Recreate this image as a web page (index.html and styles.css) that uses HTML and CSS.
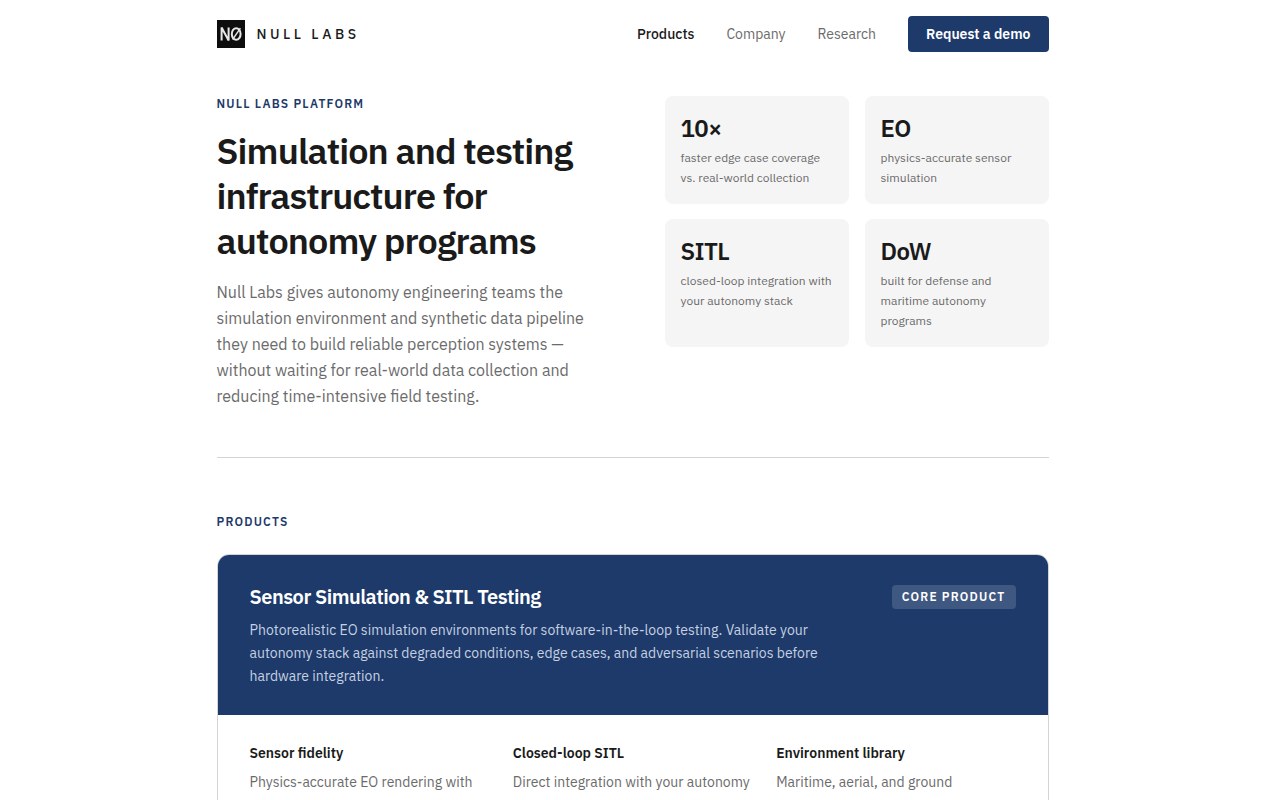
FILE: index.html
```html
<!DOCTYPE html>
<html lang="en">
<head>
<meta charset="utf-8">
<meta name="viewport" content="width=device-width, initial-scale=1">
<title>Null Labs – Products</title>
<link rel="stylesheet" href="styles.css">
</head>
<body>
<div class="page">
  <header class="header">
    <a class="brand" href="#">
      <svg class="brand-mark" viewBox="0 0 28 28" aria-hidden="true">
        <rect width="28" height="28" fill="#0d0d0d"/>
        <g fill="none" stroke="#e6e6e6" stroke-width="2">
          <path d="M4.6 20.5V7.5L11.6 20.5V7.5"/>
          <ellipse cx="19.2" cy="14" rx="4.4" ry="5.7"/>
          <path d="M15.6 19.5L23.4 8.2" stroke-width="1.4"/>
        </g>
      </svg>
      <span class="brand-name">NULL LABS</span>
    </a>
    <nav class="nav">
      <a class="nav-link nav-link-active" href="#">Products</a>
      <a class="nav-link" href="#">Company</a>
      <a class="nav-link" href="#">Research</a>
      <a class="demo" href="#">Request a demo</a>
    </nav>
  </header>
  <main>
    <section class="hero">
      <div class="intro">
        <p class="eyebrow">NULL LABS PLATFORM</p>
        <h1 class="title">Simulation and testing<br>infrastructure for<br>autonomy programs</h1>
        <p class="lead">Null Labs gives autonomy engineering teams the<br>simulation environment and synthetic data pipeline<br>they need to build reliable perception systems —<br>without waiting for real-world data collection and<br>reducing time-intensive field testing.</p>
      </div>
      <div class="stats">
        <div class="stat"><p class="stat-value">10×</p><p class="stat-text">faster edge case coverage<br>vs. real-world collection</p></div>
        <div class="stat"><p class="stat-value">EO</p><p class="stat-text">physics-accurate sensor<br>simulation</p></div>
        <div class="stat"><p class="stat-value">SITL</p><p class="stat-text">closed-loop integration with<br>your autonomy stack</p></div>
        <div class="stat"><p class="stat-value">DoW</p><p class="stat-text">built for defense and<br>maritime autonomy<br>programs</p></div>
      </div>
    </section>
    <section class="products">
      <p class="eyebrow">PRODUCTS</p>
      <article class="product">
        <div class="product-head">
          <div class="product-intro">
            <h2 class="product-title">Sensor Simulation &amp; SITL Testing</h2>
            <p class="product-text">Photorealistic EO simulation environments for software-in-the-loop testing. Validate your<br>autonomy stack against degraded conditions, edge cases, and adversarial scenarios before<br>hardware integration.</p>
          </div>
          <span class="tag">CORE PRODUCT</span>
        </div>
        <div class="features">
          <div><h3 class="feature-title">Sensor fidelity</h3><p class="feature-text">Physics-accurate EO rendering with</p></div>
          <div><h3 class="feature-title">Closed-loop SITL</h3><p class="feature-text">Direct integration with your autonomy</p></div>
          <div><h3 class="feature-title">Environment library</h3><p class="feature-text">Maritime, aerial, and ground</p></div>
        </div>
      </article>
    </section>
  </main>
</div>
</body>
</html>
```
FILE: styles.css
```css
* { box-sizing: border-box; }
body {
  margin: 0;
  padding-right: 15px;
  background: #fff;
  color: #1a1a1a;
  font-family: "IBM Plex Sans", Inter, sans-serif;
}
h1, h2, h3, p { margin: 0; }
a { color: inherit; text-decoration: none; }
.page { max-width: 896px; margin: 0 auto; padding: 0 32px; }
.header { display: flex; align-items: center; justify-content: space-between; padding: 16px 0; }
.brand { display: flex; align-items: center; gap: 12px; }
.brand-mark { width: 28px; height: 28px; }
.brand-name { font-size: 14px; font-weight: 500; letter-spacing: 0.25em; line-height: 20px; }
.nav { display: flex; align-items: center; gap: 32px; font-size: 14px; line-height: 20px; }
.nav-link { color: #6b6b6b; }
.nav-link-active { color: #1a1a1a; font-weight: 500; }
.demo { padding: 8px 18px; border-radius: 4px; background: #1d3a6b; color: #fff; font-weight: 600; }
.hero {
  display: grid;
  grid-template-columns: 1fr 1fr;
  gap: 64px;
  align-items: start;
  padding: 28px 0 48px;
  border-bottom: 1px solid #d4d4d4;
}
.eyebrow { color: #1d3a6b; font-size: 12px; font-weight: 600; letter-spacing: 0.1em; line-height: 16px; }
.title { margin-top: 16px; font-size: 36px; font-weight: 600; letter-spacing: -0.025em; line-height: 45px; white-space: nowrap; }
.lead { margin-top: 16px; color: #6b6b6b; font-size: 16px; line-height: 26px; white-space: nowrap; }
.stats { display: grid; grid-template-columns: 1fr 1fr; gap: 15px 16px; }
.stat { padding: 16px; border-radius: 8px; background: #f5f5f5; white-space: nowrap; }
.stat-value { font-size: 24px; font-weight: 600; letter-spacing: -0.025em; line-height: 32px; }
.stat-text { margin-top: 4px; color: #6b6b6b; font-size: 12px; line-height: 20px; }
.products { padding-top: 56px; }
.product { margin-top: 24px; border: 1px solid #d4d4d4; border-radius: 12px; overflow: hidden; }
.product-head { display: flex; justify-content: space-between; align-items: flex-start; padding: 28px 32px 27px; background: #1d3a6b; color: #fff; }
.product-title { font-size: 20px; font-weight: 600; letter-spacing: -0.025em; line-height: 28px; }
.product-text { margin-top: 8px; color: #c5d0e0; font-size: 14px; line-height: 23px; white-space: nowrap; }
.tag { margin-top: 2px; padding: 4px 10px; border-radius: 4px; background: #3f5881; font-size: 12px; font-weight: 600; letter-spacing: 0.1em; line-height: 16px; white-space: nowrap; }
.features { display: grid; grid-template-columns: repeat(3, 1fr); gap: 24px; padding: 28px 32px; }
.feature-title { font-size: 14px; font-weight: 600; line-height: 20px; }
.feature-text { margin-top: 8px; color: #6b6b6b; font-size: 14px; line-height: 23px; white-space: nowrap; }
```
